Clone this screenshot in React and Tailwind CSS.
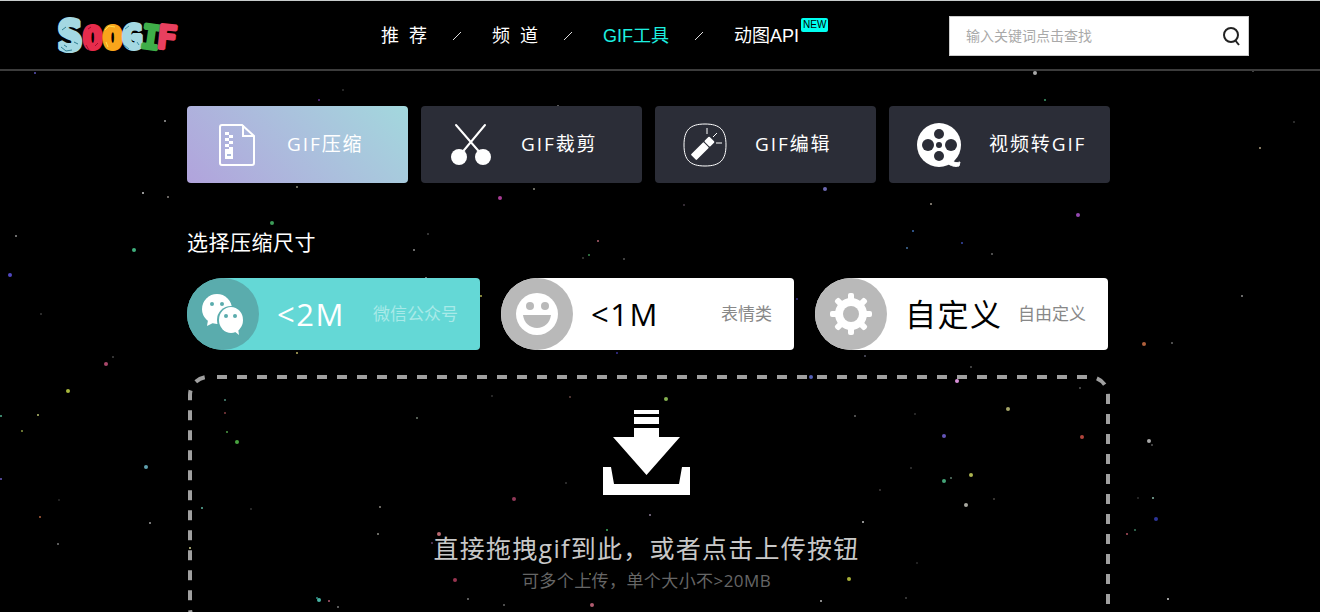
import React, { useState } from 'react'
import clsx from 'clsx'

// [x, y, radius, colour]
const stars = [
  [35, 73, 1, "#5a52b8"], [165, 121, 1, "#a0a0a0"], [143, 193, 1, "#c8c8c8"], [168, 197, 1, "#8a8580"],
  [16, 236, 1, "#8f8f8f"], [134, 250, 2, "#3fae7c"], [10, 275, 2, "#5148c0"], [41, 314, 1, "#3a3a3a"],
  [106, 364, 2, "#a8476a"], [113, 357, 1, "#444444"], [68, 391, 2, "#a8b83c"], [38, 415, 1, "#b8c070"],
  [22, 431, 1, "#8a9840"], [1, 416, 1, "#4fae8c"], [146, 467, 2, "#5fa0ae"], [1, 479, 1, "#6a5cc0"],
  [59, 500, 1, "#2a2a2a"], [40, 517, 1, "#b0603c"], [150, 523, 1, "#9c9c9c"], [58, 544, 1, "#777777"],
  [319, 100, 1, "#5c2c90"], [558, 106, 1, "#777777"], [1045, 100, 1, "#3f9c6c"], [1035, 73, 2, "#a8a8a8"],
  [1253, 71, 1, "#555555"], [343, 90, 1, "#333333"], [297, 187, 1, "#8c8c78"], [534, 189, 1, "#8c8c80"],
  [500, 198, 2, "#a83c94"], [825, 189, 2, "#6c68b0"], [931, 204, 1, "#a0988c"], [1078, 215, 2, "#9448b0"],
  [1260, 148, 1, "#b0a080"], [1294, 122, 1, "#3a3a3a"], [272, 223, 2, "#3c9c58"], [200, 232, 1, "#3c3890"],
  [428, 234, 1, "#444444"], [414, 250, 1, "#8c8c8c"], [426, 278, 1, "#999999"], [598, 241, 1, "#b06070"],
  [589, 255, 1, "#3c8c50"], [583, 258, 1, "#40403c"], [624, 259, 1, "#555555"], [684, 205, 1, "#443844"],
  [913, 231, 1, "#3c6cb0"], [907, 248, 1, "#4470a0"], [962, 243, 1, "#3848a8"], [992, 254, 1, "#666666"],
  [481, 296, 1, "#b0b04c"], [297, 353, 1, "#b8b060"], [617, 353, 1, "#383098"], [797, 299, 1, "#342c80"],
  [1144, 344, 2, "#b0603c"], [1172, 343, 1, "#666666"], [1242, 296, 1, "#8c8c8c"], [865, 356, 1, "#555566"],
  [225, 400, 1, "#4f8c7c"], [225, 413, 1, "#843c40"], [227, 432, 1, "#4c9c44"], [237, 442, 2, "#48a440"],
  [417, 418, 1, "#707c70"], [202, 508, 1, "#5cb4a0"], [251, 509, 1, "#333333"], [380, 507, 1, "#8c8880"],
  [378, 534, 1, "#8c8c84"], [190, 548, 1, "#d0cf8c"], [317, 598, 1, "#2c8c84"], [319, 600, 2, "#48b4a4"],
  [329, 601, 1, "#b05870"], [338, 607, 1, "#777777"], [570, 397, 1, "#644440"], [492, 396, 1, "#333333"],
  [666, 399, 2, "#84b050"], [855, 416, 1, "#666666"], [566, 483, 1, "#383838"], [514, 499, 2, "#903858"],
  [650, 515, 1, "#8c7c98"], [607, 530, 1, "#3cb060"], [439, 534, 2, "#b86870"], [432, 543, 1, "#604068"],
  [455, 580, 2, "#983450"], [590, 574, 1, "#8c8c30"], [849, 579, 2, "#a8b038"], [821, 601, 1, "#b8b8b8"],
  [468, 599, 1, "#777777"], [504, 605, 1, "#666666"], [592, 605, 2, "#b05c70"], [863, 522, 1, "#c0c0c0"],
  [811, 377, 2, "#5460b8"], [957, 381, 2, "#d890d8"], [971, 367, 1, "#555555"], [1008, 409, 2, "#a4a468"],
  [1080, 388, 1, "#555555"], [944, 436, 2, "#6454b8"], [915, 414, 1, "#333333"], [1082, 437, 2, "#b0443c"],
  [1149, 441, 2, "#a8a8a8"], [1152, 445, 1, "#555555"], [911, 468, 1, "#383838"], [971, 475, 2, "#acb450"],
  [944, 481, 2, "#44a478"], [951, 478, 1, "#5c7c6c"], [966, 505, 2, "#a8a8a0"], [994, 499, 1, "#484440"],
  [880, 490, 1, "#403c3c"], [1153, 498, 1, "#88b8a8"], [1138, 498, 1, "#303030"], [1156, 519, 2, "#2c3498"],
  [1127, 534, 1, "#b05060"], [1135, 530, 1, "#3c7c60"], [917, 563, 1, "#2c2c2c"], [906, 598, 1, "#444444"],
  [1168, 599, 1, "#d0d0d0"],
]

const Logo = () => (
  <svg className="overflow-visible" width="122" height="50" viewBox="0 0 122 50" role="img" aria-label="SOOGIF"
    fontFamily="'DejaVu Sans Mono', monospace" fontWeight="700"
    strokeWidth="5" strokeLinejoin="bevel">
    <text x="3" y="39" fontSize="40" fill="#a4d8e2" stroke="#a4d8e2">S</text>
    <text x="28" y="38" fontSize="32" fill="#e62c4c" stroke="#e62c4c" strokeWidth="4">O</text>
    <text x="48" y="38" fontSize="32" fill="#f9a51b" stroke="#f9a51b" strokeWidth="4">O</text>
    <text x="67" y="38" fontSize="34" fill="#a4d8e2" stroke="#a4d8e2" strokeWidth="4">G</text>
    <text x="86" y="38" fontSize="33" fill="#3fae49" stroke="#3fae49" strokeWidth="3" transform="rotate(8 96 27)">I</text>
    <text x="102" y="38" fontSize="33" fill="#e8405f" stroke="#e8405f" strokeWidth="3" transform="rotate(6 111 27)">F</text>
    <g fill="none" strokeWidth="1">
      <path d="M6 36l5 4 6-1M7 19l4-3M19 31l4 2M9 34l3 2" stroke="#2f7f92" />
      <path d="M31 34l3 5M43 32l-3 3M33 18l3-2" stroke="#a50d2b" />
      <path d="M50 19l4-4 6 1M51 31l2 5" stroke="#ffe14d" />
      <path d="M69 34l5 4M82 31l2 3M70 18l4-3" stroke="#3c93a8" />
    </g>
  </svg>
)

const ZipIcon = () => (
  <svg width="44" height="44" viewBox="0 0 44 44" fill="none" stroke="#fff" strokeWidth="2">
    <path d="M7 2h20l12 11v27a2 2 0 0 1-2 2H7a2 2 0 0 1-2-2V4a2 2 0 0 1 2-2zM28 2v11h11" />
    <path d="M12 9v18M16 12v15" strokeWidth="4" strokeDasharray="3 3" />
    <path d="M10 26h8v10h-8z" fill="#fff" stroke="none" />
    <path d="M12 32h4" stroke="#a9b9dc" />
  </svg>
)

const CutIcon = () => (
  <svg width="44" height="44" viewBox="0 0 44 44" fill="#fff" stroke="#fff">
    <path d="M7 2l26 30M36 2L11 32" strokeWidth="2" strokeLinecap="round" />
    <circle cx="10" cy="34" r="8" stroke="none" />
    <circle cx="34" cy="34" r="8" stroke="none" />
  </svg>
)

const EditIcon = () => (
  <svg width="44" height="44" viewBox="0 0 44 44" fill="none" stroke="#fff">
    <path d="M22 1c15 0 21 6 21 21s-6 21-21 21S1 37 1 22 7 1 22 1z" />
    <path d="M24 5v6M30 14l4-4M33 20h6" />
    <g fill="#fff" stroke="none" transform="rotate(45 19 26)">
      <rect x="15" y="12" width="8" height="7" rx="1" />
      <rect x="15" y="20" width="8" height="18" rx="1" />
    </g>
  </svg>
)

const FilmIcon = () => (
  <svg width="44" height="44" viewBox="0 0 44 44" fill="#2b2d37">
    <circle cx="22" cy="22" r="22" fill="#fff" />
    <path d="M34 36c3 4 5 4 9 3l-1 4c-4 1-8 0-12-3z" fill="#fff" stroke="#fff" />
    <circle cx="22" cy="11" r="5" />
    <circle cx="22" cy="33" r="5" />
    <circle cx="11" cy="22" r="6" />
    <circle cx="34" cy="22" r="6" />
    <circle cx="22" cy="22" r="3" />
  </svg>
)

const WechatIcon = () => (
  <svg width="42" height="42" viewBox="0 0 42 42" fill="#fff">
    <ellipse cx="15" cy="16" rx="15" ry="15" />
    <path d="M6 27l-1 6 8-4z" />
    <circle cx="10" cy="11" r="2" fill="#5aacad" />
    <circle cx="20" cy="11" r="2" fill="#5aacad" />
    <ellipse cx="29" cy="27" rx="14" ry="14" fill="#5aacad" />
    <ellipse cx="29" cy="27" rx="12" ry="13" />
    <path d="M32 38l5 4-1-7z" />
    <circle cx="24" cy="23" r="2" fill="#5aacad" />
    <circle cx="33" cy="23" r="2" fill="#5aacad" />
  </svg>
)

const SmileIcon = () => (
  <svg width="42" height="42" viewBox="0 0 42 42" fill="#b9b9b9">
    <circle cx="21" cy="21" r="21" fill="#fff" />
    <circle cx="14" cy="13" r="4" />
    <circle cx="29" cy="13" r="4" />
    <path d="M7 22h28c-1 8-7 13-14 13S8 30 7 22z" />
  </svg>
)

const GearIcon = () => (
  <svg width="42" height="42" viewBox="0 0 42 42" fill="#fff">
    <circle cx="21" cy="21" r="16" />
    {[0, 45, 90, 135].map(a => (
      <rect key={a} x="18" y="0" width="6" height="42" rx="2" transform={`rotate(${a} 21 21)`} />
    ))}
    <circle cx="21" cy="21" r="8" fill="#b9b9b9" />
  </svg>
)

const UploadIcon = () => (
  <svg width="87" height="85" viewBox="0 0 87 85" fill="#fff">
    <path d="M31 0h25v4H31zM31 7h25v7H31zM31 18h25v9h21L43.500 65 10 27h21z" />
    <path d="M0 57h8l3 17h65l3-17h8v28H0z" />
  </svg>
)

const navItems = [
  { label: "推\u00a0\u00a0荐" },
  { label: "频\u00a0\u00a0道" },
  { label: "GIF工具", active: true },
  { label: "动图API", badge: "NEW" },
]

const tools = [
  { label: "GIF压缩", Icon: ZipIcon, active: true },
  { label: "GIF裁剪", Icon: CutIcon },
  { label: "GIF编辑", Icon: EditIcon },
  { label: "视频转GIF", Icon: FilmIcon },
]

const sizes = [
  { id: "2m", label: "<2M", note: "微信公众号", Icon: WechatIcon },
  { id: "1m", label: "<1M", note: "表情类", Icon: SmileIcon },
  { id: "custom", label: "自定义", note: "自由定义", Icon: GearIcon },
]

const App = () => {
  const [size, setSize] = useState("2m")

  return (
    <div className="relative h-screen overflow-hidden bg-black text-white font-['Open_Sans','Noto_Sans_CJK_SC',sans-serif]">

      {/* Confetti background */}
      <svg className="absolute inset-0 w-full h-full" aria-hidden="true">
        {stars.map(([x, y, r, fill]) => (
          <circle key={`${x}-${y}`} cx={x} cy={y} r={r} fill={fill} />
        ))}
      </svg>

      {/* Header */}
      <header className="relative flex items-center h-[71px] pt-[2px] pl-[55px] pr-[71px] border-t border-b-2 border-t-[#c8cccc] border-b-[#3c3c3c] font-['Liberation_Sans','Noto_Sans_CJK_SC',sans-serif]">
        <a href="#"><Logo /></a>

        <nav className="ml-[204px]">
          <ul className="flex items-center text-lg whitespace-nowrap">
            {navItems.map((item, i) => (
              <li key={item.label} className="flex items-center">
                {i > 0 && (
                  <svg className="ml-[25px] mr-[30px]" width="10" height="10" viewBox="0 0 10 10" stroke="#ddd">
                    <path d="M1 9l8-8" />
                  </svg>
                )}
                <a href="#" className={clsx("relative", item.active && "text-[#1df0e0]")}>
                  {item.label}
                  {item.badge && (
                    <span className="absolute left-full -top-1 ml-[2px] px-[2px] rounded-xs bg-[#00fff0] text-[10px] leading-[14px] text-black">
                      {item.badge}
                    </span>
                  )}
                </a>
              </li>
            ))}
          </ul>
        </nav>

        <form className="ml-auto flex items-center w-[300px] h-10 bg-white border border-[#ccc]" onSubmit={(e) => e.preventDefault()}>
          <input
            type="text"
            aria-label="搜索"
            placeholder="输入关键词点击查找"
            className="flex-1 min-w-0 pl-4 text-sm text-black placeholder:text-[#a9a9a9] outline-none"
          />
          <button type="submit" aria-label="搜索" className="pr-2">
            <svg width="18" height="20" viewBox="0 0 18 20" fill="none" stroke="#222" strokeWidth="2">
              <circle cx="9" cy="9" r="7" />
              <path d="M13 14l4 5" />
            </svg>
          </button>
        </form>
      </header>

      <main className="relative pt-[35px] pr-[23px]">
        <div className="w-full max-w-[923px] mx-auto">

          {/* Tools */}
          <div className="grid grid-cols-4 gap-[13px]">
            {tools.map(({ label, Icon, active }) => (
              <a
                key={label}
                href="#"
                className={clsx(
                  "flex items-center gap-7 h-[77px] pl-7 rounded text-[19px] tracking-widest whitespace-nowrap",
                  active ? "bg-linear-45 from-[#b1a3dc] to-[#a2d8dd]" : "bg-[#2b2d37]"
                )}
              >
                <Icon />
                {label}
              </a>
            ))}
          </div>

          {/* Target size */}
          <h2 className="mt-[45px] text-[21px] leading-7 tracking-wide">选择压缩尺寸</h2>
          <div className="mt-[22px] pr-[2px] grid grid-cols-3 gap-[21px]">
            {sizes.map(({ id, label, note, Icon }) => {
              const checked = size === id
              return (
                <label
                  key={id}
                  className={clsx(
                    "flex items-center h-[72px] pr-[22px] rounded-l-[36px] rounded-r whitespace-nowrap cursor-pointer",
                    checked ? "bg-[#64d8d6] text-white" : "bg-white text-black"
                  )}
                >
                  <input type="radio" name="size" className="sr-only" checked={checked} onChange={() => setSize(id)} />
                  <span className={clsx("flex items-center justify-center size-[72px] rounded-full", checked ? "bg-[#5aacad]" : "bg-[#b9b9b9]")}>
                    <Icon />
                  </span>
                  <span className="ml-[18px] text-[31px] leading-10 tracking-wider">{label}</span>
                  <span className={clsx("ml-auto text-[17px]", checked ? "text-[#a8eae8]" : "text-[#888]")}>{note}</span>
                </label>
              )
            })}
          </div>

          {/* Drop zone */}
          <label className="relative flex flex-col items-center mt-[25px] ml-px pt-[35px] pr-[5px] pb-[37px] cursor-pointer">
            <svg className="absolute inset-0 w-full h-full overflow-visible" fill="none" aria-hidden="true">
              <rect x="2" y="2" rx="18" className="w-[calc(100%-4px)] h-[calc(100%-4px)]" stroke="#a0a0a0" strokeWidth="4" strokeDasharray="10 10" strokeDashoffset="-9" />
            </svg>
            <input type="file" accept="image/gif" multiple className="sr-only" />
            <UploadIcon />
            <span className="mt-[37px] text-[25px] leading-8 tracking-wider text-[#c8c8c8]">直接拖拽gif到此，或者点击上传按钮</span>
            <span className="mt-[7px] text-[17px] leading-5 tracking-wide text-[#666]">可多个上传，单个大小不&gt;20MB</span>
          </label>
        </div>
      </main>
    </div>
  )
}

export default App
